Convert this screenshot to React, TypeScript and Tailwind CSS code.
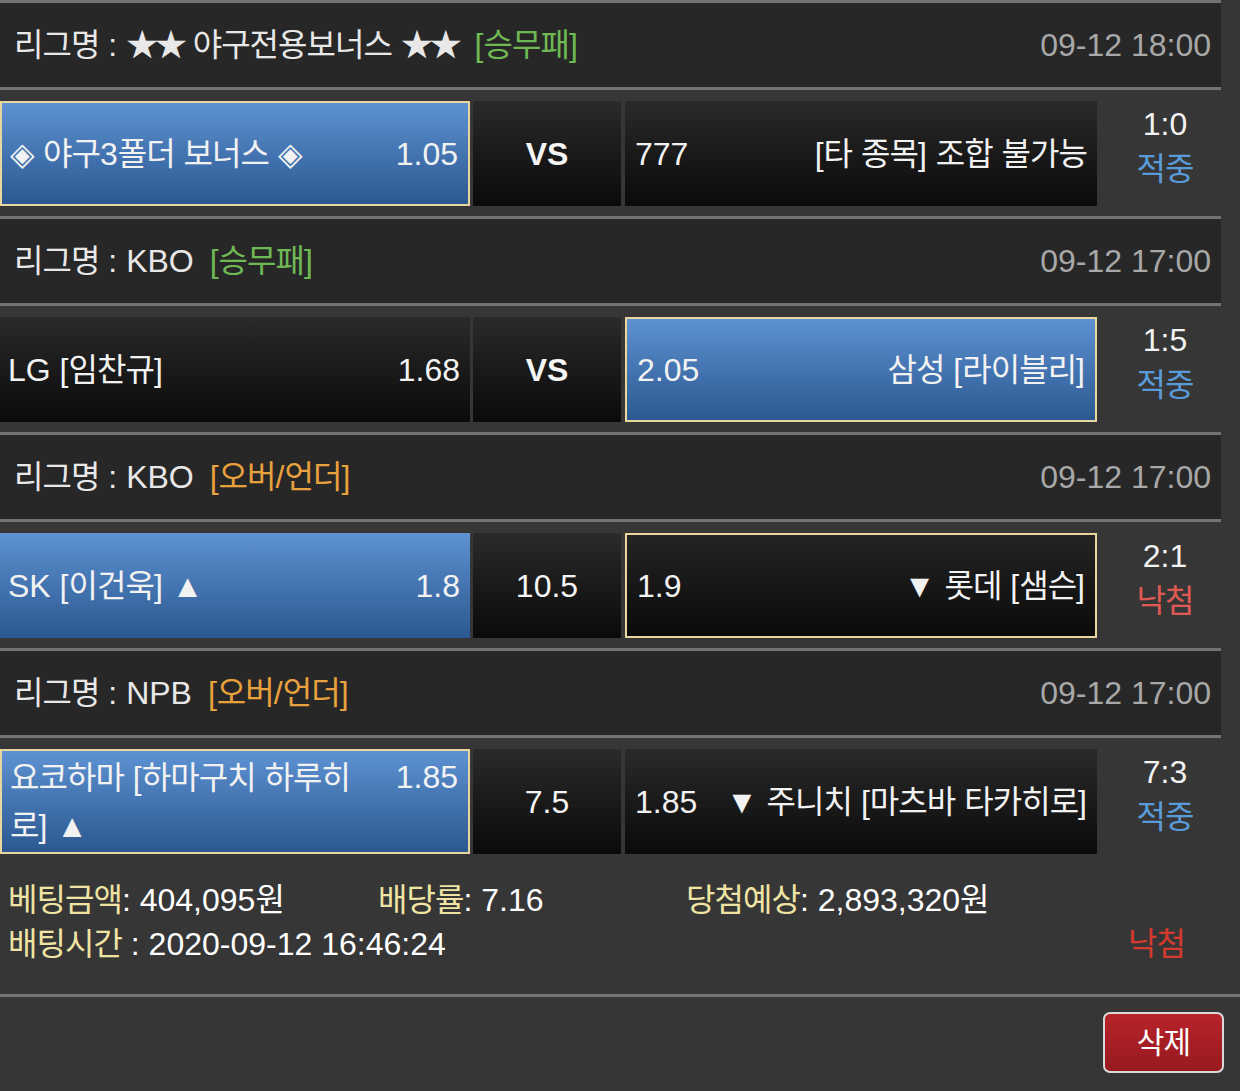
import React from "react";

const hangul = /([\uAC00-\uD7A3\u25C8]+|\u2605+)/;

function T({ t }: { t: string }) {
    return (
        <>
            {t.split(hangul).map((p, i) =>
                hangul.test(p) ? (
                    Array.from(p).map((c, j) => (
                        <span key={i + "-" + j} className={c === "★" ? "tracking-[-0.1em]" : "tracking-[-0.03em]"}>
                            {c}
                        </span>
                    ))
                ) : (
                    <React.Fragment key={i}>{p}</React.Fragment>
                )
            )}
        </>
    );
}

type Side = { name: string; odds: string; look: "blue" | "blueGold" | "dark" | "darkGold" };

type Game = {
    league: string;
    tag: string;
    tagColor: string;
    time: string;
    home: Side;
    wrap?: boolean;
    mid: string;
    bold: boolean;
    away: Side;
    score: string;
    result: string;
    resultColor: string;
};

const games: Game[] = [
    {
        league: "리그명 : ★★ 야구전용보너스 ★★",
        tag: "[승무패]",
        tagColor: "text-[#6fb954]",
        time: "09-12 18:00",
        home: { name: "◈ 야구3폴더 보너스 ◈", odds: "1.05", look: "blueGold" },
        mid: "VS",
        bold: true,
        away: { name: "[타 종목] 조합 불가능", odds: "777", look: "dark" },
        score: "1:0",
        result: "적중",
        resultColor: "text-[#5a9ad8]",
    },
    {
        league: "리그명 : KBO",
        tag: "[승무패]",
        tagColor: "text-[#6fb954]",
        time: "09-12 17:00",
        home: { name: "LG [임찬규]", odds: "1.68", look: "dark" },
        mid: "VS",
        bold: true,
        away: { name: "삼성 [라이블리]", odds: "2.05", look: "blueGold" },
        score: "1:5",
        result: "적중",
        resultColor: "text-[#5a9ad8]",
    },
    {
        league: "리그명 : KBO",
        tag: "[오버/언더]",
        tagColor: "text-[#e9a13e]",
        time: "09-12 17:00",
        home: { name: "SK [이건욱] ▲", odds: "1.8", look: "blue" },
        mid: "10.5",
        bold: false,
        away: { name: "▼ 롯데 [샘슨]", odds: "1.9", look: "darkGold" },
        score: "2:1",
        result: "낙첨",
        resultColor: "text-[#e05a55]",
    },
    {
        league: "리그명 : NPB",
        tag: "[오버/언더]",
        tagColor: "text-[#e9a13e]",
        time: "09-12 17:00",
        home: { name: "요코하마 [하마구치 하루히로] ▲", odds: "1.85", look: "blueGold" },
        wrap: true,
        mid: "7.5",
        bold: false,
        away: { name: "▼ 주니치 [마츠바 타카히로]", odds: "1.85", look: "dark" },
        score: "7:3",
        result: "적중",
        resultColor: "text-[#5a9ad8]",
    },
];

const looks = {
    blue: "bg-linear-to-b from-[#5e92d3] to-[#2b5890]",
    blueGold: "bg-linear-to-b from-[#5e92d3] to-[#2b5890] border-2 border-[#e8d69c]",
    dark: "bg-linear-to-b from-[#2a2a2a] to-[#0b0b0b]",
    darkGold: "bg-linear-to-b from-[#242424] to-[#0b0b0b] border-2 border-[#e8d69c]",
};

function Line() {
    return <div className="h-[3px] w-[1221px] bg-[#747474]" />;
}

function GameRow({ g }: { g: Game }) {
    return (
        <div>
            <Line />
            <div className="h-[84px] w-[1221px] bg-[#272727] flex items-center justify-between pl-[14px] pr-[10px]">
                <div className="text-[#e8e8e8]">
                    <T t={g.league} />
                    <span className={`ml-[16px] ${g.tagColor}`}>
                        <T t={g.tag} />
                    </span>
                </div>
                <div className="text-[#a8a8a8]">{g.time}</div>
            </div>
            <Line />
            <div className="flex pt-[11px] pb-[10px] w-[1233px]">
                <div
                    className={`w-[470px] h-[105px] flex items-center justify-between pl-[8px] pr-[10px] text-[#f2f2f2] ${looks[g.home.look]}`}
                >
                    <span className="w-[350px] leading-[48px]">
                        <T t={g.home.name} />
                    </span>
                    <span className={g.wrap ? "self-start mt-[2px] leading-[48px]" : ""}>{g.home.odds}</span>
                </div>
                <div
                    className={`ml-[3px] w-[148px] h-[105px] flex items-center justify-center text-[#f5f5f5] ${looks.dark} ${
                        g.bold ? "font-bold" : ""
                    }`}
                >
                    {g.mid}
                </div>
                <div
                    className={`ml-[4px] w-[472px] h-[105px] flex items-center justify-between pl-[10px] pr-[10px] text-[#f2f2f2] ${looks[g.away.look]}`}
                >
                    <span>{g.away.odds}</span>
                    <span>
                        <T t={g.away.name} />
                    </span>
                </div>
                <div className="w-[136px] h-[105px] flex flex-col items-center pt-[1px] leading-[45px]">
                    <span className="text-[#f2f2f2]">{g.score}</span>
                    <span className={g.resultColor}>
                        <T t={g.result} />
                    </span>
                </div>
            </div>
        </div>
    );
}

export default function App() {
    return (
        <div className="w-[1240px] h-[1091px] bg-[#363636] font-['Liberation_Sans','Noto_Sans_CJK_KR',sans-serif] text-[32px] overflow-hidden">
            {games.map((g, i) => (
                <GameRow key={i} g={g} />
            ))}
            <div className="pt-[14px] pl-[8px] leading-[44px] text-white">
                <div className="flex">
                    <div className="w-[370px]">
                        <span className="text-[#efe4a4]">
                            <T t="베팅금액" />
                        </span>
                        : 404,095<T t="원" />
                    </div>
                    <div className="w-[308px]">
                        <span className="text-[#efe4a4]">
                            <T t="배당률" />
                        </span>
                        : 7.16
                    </div>
                    <div>
                        <span className="text-[#efe4a4]">
                            <T t="당첨예상" />
                        </span>
                        : 2,893,320<T t="원" />
                    </div>
                </div>
                <div className="flex justify-between pr-[55px]">
                    <div>
                        <span className="text-[#efe4a4]">
                            <T t="배팅시간" />
                        </span>{" "}
                        : 2020-09-12 16:46:24
                    </div>
                    <div className="text-[#d63a2e]">
                        <T t="낙첨" />
                    </div>
                </div>
            </div>
            <div className="mt-[28px] h-[3px] bg-[#747474]" />
            <div className="flex justify-end pr-[16px] pt-[15px]">
                <button className="w-[121px] h-[61px] rounded-[7px] border-2 border-[#d9d9d9] bg-linear-to-b from-[#b8232a] to-[#961a1f] text-white text-[30px]">
                    <T t="삭제" />
                </button>
            </div>
        </div>
    );
}
